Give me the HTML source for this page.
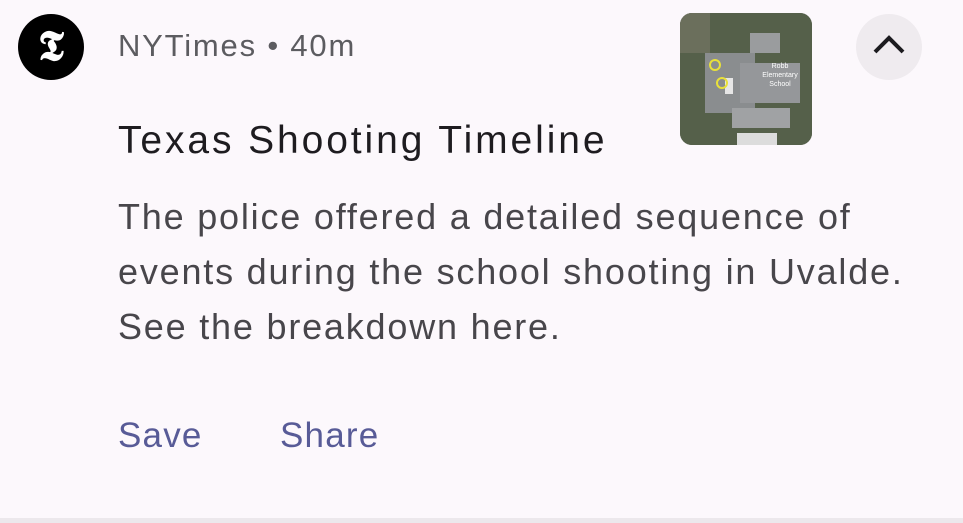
<!DOCTYPE html>
<html><head><style>
html,body{margin:0;padding:0}
body{width:963px;height:523px;background:#fcf8fc;position:relative;overflow:hidden;font-family:"Liberation Sans",sans-serif}
.logo{position:absolute;left:18px;top:14px;width:66px;height:66px;border-radius:50%;background:#000;color:#fff;font-family:"Liberation Serif",serif;font-weight:bold;font-size:42px;line-height:66px;text-align:center}
.hdr{position:absolute;left:118px;top:28px;font-size:31px;letter-spacing:1.8px;color:#5c5c60;white-space:nowrap}
.title{position:absolute;left:118px;top:119px;font-size:39px;letter-spacing:2.9px;color:#1e1c20;white-space:nowrap}
.body{position:absolute;left:118px;top:189px;font-size:36px;letter-spacing:1.8px;line-height:55px;color:#48464b;width:845px;white-space:nowrap}
.btn{position:absolute;top:416px;font-size:35px;letter-spacing:1.2px;color:#585b97}
.thumb{position:absolute;left:680px;top:13px;width:132px;height:132px;border-radius:12px;overflow:hidden;background:#4e5546}
.chev{position:absolute;left:856px;top:14px;width:66px;height:66px;border-radius:50%;background:#efebef}
.bottom{position:absolute;left:0;top:518px;width:963px;height:5px;background:#ece8ec}
</style></head><body>
<div class="logo">𝕿</div>
<div class="hdr">NYTimes • 40m</div>
<div class="title">Texas Shooting Timeline</div>
<div class="body">The police offered a detailed sequence of<br>events during the school shooting in Uvalde.<br>See the breakdown here.</div>
<div class="btn" style="left:118px">Save</div>
<div class="btn" style="left:280px">Share</div>
<div class="thumb">
<svg width="132" height="132" viewBox="0 0 132 132">
<rect width="132" height="132" fill="#55604a"/>
<rect x="0" y="0" width="30" height="40" fill="#6b6f5c"/>
<rect x="25" y="40" width="50" height="60" fill="#8a8d8f"/>
<rect x="70" y="20" width="30" height="20" fill="#9a9c9e"/>
<rect x="60" y="50" width="60" height="40" fill="#95979a"/>
<rect x="52" y="95" width="58" height="20" fill="#a0a2a4"/>
<rect x="57" y="120" width="40" height="12" fill="#dcdcdc"/>
<rect x="45" y="65" width="8" height="16" fill="#e6e6e6"/>
<circle cx="35" cy="52" r="5" fill="none" stroke="#e8e03a" stroke-width="2"/>
<circle cx="42" cy="70" r="5" fill="none" stroke="#e8e03a" stroke-width="2"/>
<text x="100" y="55" font-size="7" fill="#fff" text-anchor="middle" font-family="Liberation Sans">Robb</text>
<text x="100" y="64" font-size="7" fill="#fff" text-anchor="middle" font-family="Liberation Sans">Elementary</text>
<text x="100" y="73" font-size="7" fill="#fff" text-anchor="middle" font-family="Liberation Sans">School</text>
</svg></div>
<div class="chev"><svg width="66" height="66" viewBox="0 0 66 66"><path d="M19 38 L33 24 L47 38" fill="none" stroke="#1c1b1f" stroke-width="4"/></svg></div>
<div class="bottom"></div>
</body></html>
